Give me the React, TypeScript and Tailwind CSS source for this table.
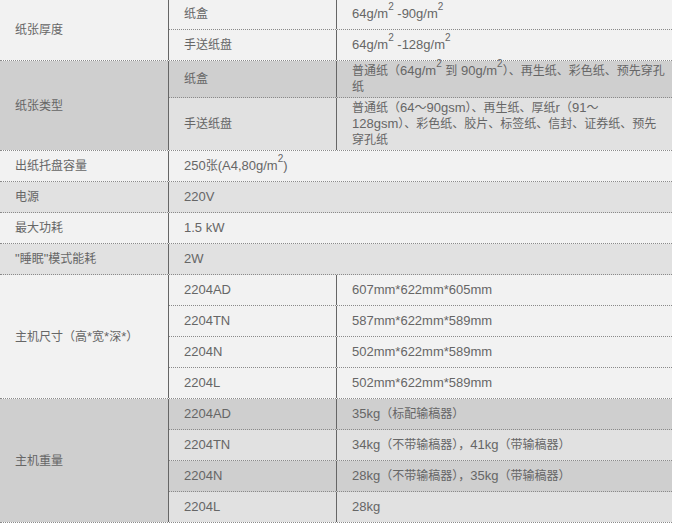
import React from "react";

// CJK runs render at 12px, latin at 13px (matches the reference page)
const CJK = /([\u3000-\u303f\u4e00-\u9fff\uff00-\uffef]+)/;

function T({ s }: { s: string }) {
  return (
    <>
      {s.split(CJK).map((part, i) =>
        i % 2 === 1 ? (
          <span key={i} className="text-[12px]">
            {part}
          </span>
        ) : (
          part
        )
      )}
    </>
  );
}

function Sq() {
  return <sup className="-top-[8px] text-[10px]">2</sup>;
}

type Sub = { k: string; v: React.ReactNode; bg: string };
type Row = { label: string; bg: string; value?: React.ReactNode; subs?: Sub[] };

const LIGHT = "bg-[#f2f2f2]";
const MID = "bg-[#e1e1e1]";
const DARK = "bg-[#cfcfcf]";

const rows: Row[] = [
  {
    label: "纸张厚度",
    bg: LIGHT,
    subs: [
      { k: "纸盒", v: <>64g/m<Sq /> -90g/m<Sq /></>, bg: LIGHT },
      { k: "手送纸盘", v: <>64g/m<Sq /> -128g/m<Sq /></>, bg: LIGHT },
    ],
  },
  {
    label: "纸张类型",
    bg: DARK,
    subs: [
      {
        k: "纸盒",
        v: (
          <>
            <T s="普通纸（" />64g/m<Sq /> <T s="到" /> 90g/m<Sq />
            <T s="）、再生纸、彩色纸、预先穿孔" />
            <br />
            <T s="纸" />
          </>
        ),
        bg: DARK,
      },
      {
        k: "手送纸盘",
        v: (
          <>
            <T s="普通纸（64～90gsm）、再生纸、厚纸r（91～" />
            <br />
            <T s="128gsm）、彩色纸、胶片、标签纸、信封、证券纸、预先" />
            <br />
            <T s="穿孔纸" />
          </>
        ),
        bg: MID,
      },
    ],
  },
  { label: "出纸托盘容量", bg: LIGHT, value: <><T s="250张(A4,80g/m" /><Sq />)</> },
  { label: "电源", bg: MID, value: "220V" },
  { label: "最大功耗", bg: LIGHT, value: "1.5 kW" },
  { label: "\"睡眠\"模式能耗", bg: MID, value: "2W" },
  {
    label: "主机尺寸（高*宽*深*）",
    bg: LIGHT,
    subs: [
      { k: "2204AD", v: "607mm*622mm*605mm", bg: LIGHT },
      { k: "2204TN", v: "587mm*622mm*589mm", bg: LIGHT },
      { k: "2204N", v: "502mm*622mm*589mm", bg: LIGHT },
      { k: "2204L", v: "502mm*622mm*589mm", bg: LIGHT },
    ],
  },
  {
    label: "主机重量",
    bg: DARK,
    subs: [
      { k: "2204AD", v: <T s="35kg（标配输稿器）" />, bg: DARK },
      { k: "2204TN", v: <T s="34kg（不带输稿器），41kg（带输稿器）" />, bg: MID },
      { k: "2204N", v: <T s="28kg（不带输稿器），35kg（带输稿器）" />, bg: DARK },
      { k: "2204L", v: "28kg", bg: MID },
    ],
  },
];

function Cell({ children, className = "" }: { children: React.ReactNode; className?: string }) {
  return (
    <div className={`flex items-center py-[2px] pl-[15px] ${className}`}>
      <div>{children}</div>
    </div>
  );
}

export default function App() {
  return (
    <div className="min-h-screen bg-white">
      <div className="-mt-px w-[672px] font-['Liberation_Sans','Noto_Sans_CJK_SC',sans-serif] text-[13px] leading-[16px] text-[#666]">
        {rows.map((r, idx) =>
          r.subs ? (
            <div key={idx} className="flex border-b border-dotted border-[#8a8a8a]">
              <Cell className={`w-[169px] shrink-0 border-r border-solid border-[#666] ${r.bg}`}>
                <T s={r.label} />
              </Cell>
              <div className="flex flex-1 flex-col">
                {r.subs.map((s, i) => {
                  const last = i === r.subs!.length - 1;
                  return (
                    <div
                      key={i}
                      className={`flex border-dotted border-[#8a8a8a] ${
                        last ? "min-h-[30px]" : "min-h-[31px] border-b"
                      } ${s.bg}`}
                    >
                      <Cell className="w-[168px] shrink-0 border-r border-solid border-[#666]">
                        <T s={s.k} />
                      </Cell>
                      <Cell className="flex-1">
                        {typeof s.v === "string" ? <T s={s.v} /> : s.v}
                      </Cell>
                    </div>
                  );
                })}
              </div>
            </div>
          ) : (
            <div key={idx} className={`flex min-h-[31px] border-b border-dotted border-[#8a8a8a] ${r.bg}`}>
              <Cell className="w-[169px] shrink-0 border-r border-solid border-[#666]">
                <T s={r.label} />
              </Cell>
              <Cell className="flex-1">
                {typeof r.value === "string" ? <T s={r.value} /> : r.value}
              </Cell>
            </div>
          )
        )}
      </div>
    </div>
  );
}
